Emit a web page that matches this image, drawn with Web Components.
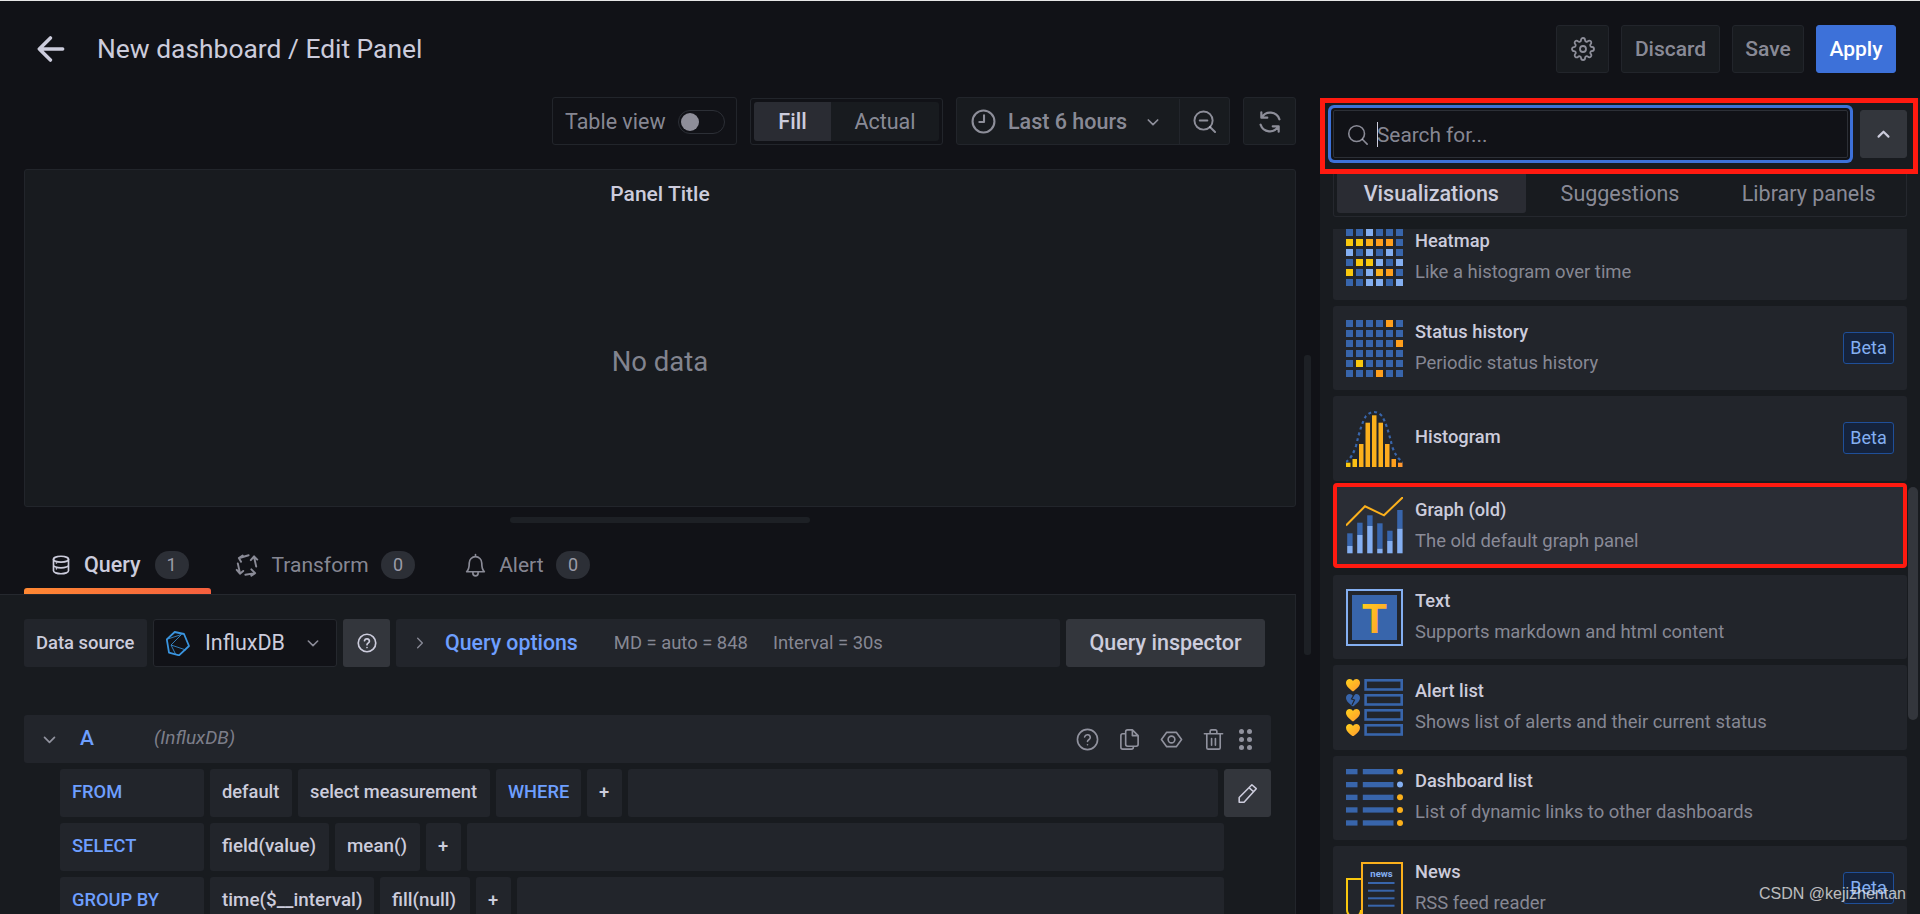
<!DOCTYPE html>
<html lang="en">
<head>
<meta charset="utf-8">
<title>Edit Panel</title>
<style>
  html, body { margin: 0; height: 100%; background: #111217; overflow: hidden; }
  body { font-family: Roboto, "Liberation Sans", sans-serif; color: #ccccdc; }
</style>
</head>
<body>
<gf-app></gf-app>
<script>
const BLUE = '#3865ab', LIGHT = '#84aff1';

/** Line icons, drawn on a 24 unit grid. */
const ICONS = {
    gear: '<circle cx="12" cy="12" r="3"/><path d="M19.4 15a1.65 1.65 0 0 0 .33 1.82l.06.06a2 2 0 0 1 0 2.83 2 2 0 0 1-2.83 0l-.06-.06a1.65 1.65 0 0 0-1.82-.33 1.65 1.65 0 0 0-1 1.51V21a2 2 0 0 1-2 2 2 2 0 0 1-2-2v-.09A1.65 1.65 0 0 0 9 19.4a1.65 1.65 0 0 0-1.82.33l-.06.06a2 2 0 0 1-2.83 0 2 2 0 0 1 0-2.83l.06-.06a1.65 1.65 0 0 0 .33-1.82 1.65 1.65 0 0 0-1.51-1H3a2 2 0 0 1-2-2 2 2 0 0 1 2-2h.09A1.65 1.65 0 0 0 4.6 9a1.65 1.65 0 0 0-.33-1.82l-.06-.06a2 2 0 0 1 0-2.83 2 2 0 0 1 2.83 0l.06.06a1.65 1.65 0 0 0 1.82.33H9a1.65 1.65 0 0 0 1-1.51V3a2 2 0 0 1 2-2 2 2 0 0 1 2 2v.09a1.65 1.65 0 0 0 1 1.51 1.65 1.65 0 0 0 1.82-.33l.06-.06a2 2 0 0 1 2.83 0 2 2 0 0 1 0 2.83l-.06.06a1.65 1.65 0 0 0-.33 1.82V9a1.65 1.65 0 0 0 1.51 1H21a2 2 0 0 1 2 2 2 2 0 0 1-2 2h-.09a1.65 1.65 0 0 0-1.51 1z"/>',
    back: '<path d="M2 12h20M11.5 2.5 2 12l9.5 9.5"/>',
    clock: '<circle cx="12" cy="12" r="10.5"/><path d="M12.5 6v6.5H8"/>',
    zoomout: '<circle cx="11" cy="11" r="9.5"/><path d="M23 23l-5.3-5.3M7 11h8"/>',
    sync: '<path d="M4 3v5h5.500M4.300 8A9 9 0 0 1 20.700 9.500M20 21v-5h-5.500M19.700 16A9 9 0 0 1 3.300 14.500"/>',
    search: '<circle cx="11" cy="11" r="9"/><path d="M23 23l-5.500-5.500"/>',
    database: '<ellipse cx="12" cy="5" rx="9" ry="3.500"/><path d="M3 5v14c0 1.900 4 3.500 9 3.500s9-1.600 9-3.500V5M3 12c0 1.900 4 3.500 9 3.500s9-1.600 9-3.500"/><path d="M6.500 9.600h.01M6.500 16.600h.01"/>',
    transform: '<path d="M13.500 3 5 5.500M8 3.200 4.500 5.500 6.500 9M20.500 13.500 18.500 4.500M15.500 7.500 18.500 4 21.500 7M10.500 21l9-1.500M16 16l3.500 3.500-3.500 2.300M3.500 10.500l2 9M2.500 16.500l3 3.500 3-2.500"/>',
    bell: '<path d="M18 9.500a6 6 0 0 0-12 0c0 5-1 7-2.500 8.500h17C19 16.500 18 14.500 18 9.500zM12 3.500V1.500M9.500 18v1.500a2.500 2.500 0 0 0 5 0V18"/>',
    help: '<circle cx="12" cy="12" r="10.500"/><path d="M9 9.300a3 3 0 0 1 5.900.7c0 2-2.900 2.400-2.900 4M12 17.500h.01"/>',
    copy: '<path d="M10 2h5l6 6v9a2 2 0 0 1-2 2h-9a2 2 0 0 1-2-2V4a2 2 0 0 1 2-2zM15 2v6h6M8 6H5a2 2 0 0 0-2 2v12a2 2 0 0 0 2 2h9a2 2 0 0 0 2-2v-1"/>',
    eye: '<path d="M1.500 12 7 4.500h10L22.500 12 17 19.500H7z" stroke-linejoin="round"/><circle cx="12" cy="12" r="3.500"/>',
    trash: '<path d="M2.500 6h19M8.500 6V3.500a1.500 1.500 0 0 1 1.500-1.500h4a1.500 1.500 0 0 1 1.500 1.500V6M19 6v14.500a1.500 1.500 0 0 1-1.500 1.500h-11A1.500 1.500 0 0 1 5 20.500V6M10 11v7M14 11v7"/>',
    pen: '<path d="M17 2l5 4.500L8 22H2.500v-5.500zM14 5.500l5 4.500"/>',
    down: '<path d="M5 9l7 7 7-7"/>',
    up: '<path d="M5 15l7-7 7 7"/>',
    right: '<path d="M8 4l8 8-8 8"/>'
};

/**
 * A single line icon from the ICONS table.
 */
class GfIcon extends HTMLElement {
    connectedCallback() {
        const size = this.getAttribute('size') || 24;
        const weight = this.getAttribute('weight') || 2;
        this.attachShadow({ mode: 'open' }).innerHTML = `
            <style>:host { display: inline-flex; flex: none; line-height: 0; }</style>
            <svg width="${size}" height="${size}" viewBox="0 0 24 24" fill="none" stroke="currentColor"
                 stroke-width="${weight}" stroke-linecap="round" stroke-linejoin="round">${ICONS[this.getAttribute('name')]}</svg>`;
    }
}
customElements.define('gf-icon', GfIcon);

/**
 * Toolbar and form button. Variants: default (outlined), primary, solid.
 */
class GfButton extends HTMLElement {
    constructor() {
        super();
        this.attachShadow({ mode: 'open' }).innerHTML = `
            <style>
                :host {
                    display: inline-flex; align-items: center; justify-content: center; flex: none;
                    box-sizing: border-box; height: 48px; padding: 0 13px; border-radius: 3px;
                    font: 500 21px/1 Roboto, sans-serif; color: rgba(204,204,220,.65);
                    background: #181b1f; border: 1px solid #22252b;
                }
                :host([variant=primary]) { background: #3d71d9; border-color: #3d71d9; color: #fff; }
                :host([variant=solid]) { background: #33363c; border-color: #33363c; color: #ccccdc; }
            </style>
            <slot></slot>`;
    }
}
customElements.define('gf-button', GfButton);

/**
 * Page header: back arrow, breadcrumb title and the action buttons.
 */
class GfTopBar extends HTMLElement {
    constructor() {
        super();
        this.attachShadow({ mode: 'open' }).innerHTML = `
            <style>
                :host { display: flex; align-items: center; box-sizing: border-box; height: 96px; padding: 0 24px 0 37px; }
                .back { color: #ccccdc; }
                h1 { margin: 0 auto 0 32px; font: 400 26.400px/1 Roboto, sans-serif; color: #ccccdc; }
                .actions { display: flex; gap: 12px; }
                #settings { width: 53px; }
                #discard { width: 99px; }
                #save { width: 72px; }
                #apply { width: 80px; }
            </style>
            <gf-icon class="back" name="back" size="28" weight="3"></gf-icon>
            <h1>New dashboard / Edit Panel</h1>
            <div class="actions">
                <gf-button id="settings"><gf-icon name="gear" size="24" weight="1.800"></gf-icon></gf-button>
                <gf-button id="discard">Discard</gf-button>
                <gf-button id="save">Save</gf-button>
                <gf-button id="apply" variant="primary">Apply</gf-button>
            </div>`;
    }
}
customElements.define('gf-top-bar', GfTopBar);

/**
 * Row above the panel: table toggle, fill mode, time range and refresh.
 */
class GfPanelToolbar extends HTMLElement {
    constructor() {
        super();
        this.attachShadow({ mode: 'open' }).innerHTML = `
            <style>
                :host { display: flex; justify-content: flex-end; align-items: stretch; gap: 13px; height: 48px; font: 400 21.500px/1 Roboto, sans-serif; color: rgba(204,204,220,.65); }
                .box { display: flex; align-items: center; box-sizing: border-box; border: 1px solid #22252b; border-radius: 3px; }
                .table { width: 185px; padding: 1px 0 0 12px; gap: 12px; }
                .switch { position: relative; box-sizing: border-box; width: 47px; height: 24px; border: 1px solid #2c2f36; border-radius: 12px; }
                .switch::after { content: ""; position: absolute; left: 2px; top: 2px; width: 18px; height: 18px; border-radius: 50%; background: #8e8e99; }
                .fill { width: 193px; padding: 3px; margin-top: 1px; }
                .fill span { display: flex; align-items: center; justify-content: center; height: 39px; background: #181b1f; }
                .fill .on { width: 77px; flex: none; background: #2a2c33; color: #ccccdc; font-weight: 500; border-radius: 3px 0 0 3px; }
                .fill .off { flex: 1; border-radius: 0 3px 3px 0; }
                .time { width: 274px; padding-top: 1px; background: #181b1f; font-weight: 500; }
                .range { display: flex; align-items: center; height: 100%; width: 223px; box-sizing: border-box; padding-left: 14px; gap: 12px; border-right: 1px solid #22252b; }
                .range gf-icon:last-child { margin-left: 6px; }
                .minus { flex: 1; display: flex; justify-content: center; }
                .refresh { width: 53px; padding-top: 1px; justify-content: center; background: #181b1f; }
            </style>
            <div class="box table">Table view<div class="switch"></div></div>
            <div class="box fill"><span class="on">Fill</span><span class="off">Actual</span></div>
            <div class="box time">
                <div class="range"><gf-icon name="clock" size="25"></gf-icon>Last 6 hours<gf-icon name="down" size="16" weight="2.600"></gf-icon></div>
                <div class="minus"><gf-icon name="zoomout" size="23"></gf-icon></div>
            </div>
            <div class="box refresh"><gf-icon name="sync" size="26"></gf-icon></div>`;
    }
}
customElements.define('gf-panel-toolbar', GfPanelToolbar);

/**
 * The empty preview panel.
 */
class GfPanelView extends HTMLElement {
    constructor() {
        super();
        this.attachShadow({ mode: 'open' }).innerHTML = `
            <style>
                :host { display: flex; flex-direction: column; box-sizing: border-box; height: 338px; margin: 24px 0 0 24px; background: #181b1f; border: 1px solid #22252b; border-radius: 3px; }
                .title { height: 48px; display: flex; align-items: center; justify-content: center; font: 500 21px/1 Roboto, sans-serif; color: #ccccdc; }
                .empty { flex: 1; display: flex; align-items: center; justify-content: center; font: 400 27.500px/1 Roboto, sans-serif; color: rgba(204,204,220,.6); }
            </style>
            <div class="title">Panel Title</div>
            <div class="empty">No data</div>`;
    }
}
customElements.define('gf-panel-view', GfPanelView);

/**
 * Query / Transform / Alert tab strip.
 */
class GfTabBar extends HTMLElement {
    constructor() {
        super();
        this.attachShadow({ mode: 'open' }).innerHTML = `
            <style>
                :host { display: flex; box-sizing: border-box; height: 71px; padding-left: 24px; font: 400 21px/1 Roboto, sans-serif; color: rgba(204,204,220,.65); }
                .tab { display: flex; align-items: center; height: 71px; box-sizing: border-box; padding-top: 13px; gap: 11.500px; position: relative; }
                .tab.on { color: #ccccdc; font-weight: 500; font-size: 21.500px; width: 187px; padding-left: 27px; gap: 13px; }
                .tab.on::after { content: ""; position: absolute; left: 0; right: 0; bottom: 0; height: 6px; border-radius: 3px 3px 0 0; background: linear-gradient(90deg, #ff8833, #f55f3e); }
                .tab.t { margin-left: 23px; }
                .tab.a { margin-left: 47.500px; }
                .count { display: flex; align-items: center; justify-content: center; width: 34px; height: 28px; margin-left: 1px; border-radius: 14px; background: #2c2f36; font-size: 18px; font-weight: 400; color: rgba(204,204,220,.7); }
            </style>
            <div class="tab on"><gf-icon name="database" size="20"></gf-icon>Query<span class="count">1</span></div>
            <div class="tab t"><gf-icon name="transform" size="26" weight="1.800"></gf-icon>Transform<span class="count">0</span></div>
            <div class="tab a"><gf-icon name="bell" size="25" weight="1.600"></gf-icon>Alert<span class="count">0</span></div>`;
    }
}
customElements.define('gf-tab-bar', GfTabBar);

/**
 * One cell of the query builder. kind: key (blue), value, or fill (empty stretch).
 */
class GfSegment extends HTMLElement {
    constructor() {
        super();
        const width = this.getAttribute('w');
        this.attachShadow({ mode: 'open' }).innerHTML = `
            <style>
                :host { display: flex; align-items: center; flex: none; box-sizing: border-box; height: 48px; padding: 0 0 2px 12px; border-radius: 3px; background: #22252b; font: 500 18.300px/1 Roboto, sans-serif; color: #ccccdc; white-space: nowrap; }
                :host([kind=key]) { color: #6e9fff; }
                :host([kind=label]) { color: #6e9fff; width: 144px; }
                :host([kind=fn]) { font-size: 18.800px; }
                :host([kind=fill]) { flex: 1; padding: 0; }
            </style>
            <slot></slot>`;
        if (width) this.style.width = width + 'px';
    }
}
customElements.define('gf-segment', GfSegment);

/**
 * Data source row plus query A with its FROM / SELECT / GROUP BY rows.
 */
class GfQueryEditor extends HTMLElement {
    constructor() {
        super();
        this.attachShadow({ mode: 'open' }).innerHTML = `
            <style>
                :host { display: block; flex: 1; box-sizing: border-box; padding: 24px 25px 0 24px; background: #181b1f; border-top: 1px solid #25282e; border-right: 1px solid #22252b; overflow: hidden; }
                .source { display: flex; gap: 6px; height: 48px; width: 1241px; }
                .cell { display: flex; align-items: center; box-sizing: border-box; height: 48px; border-radius: 3px; background: #22252b; }
                .ds { width: 123px; padding-left: 12px; font: 500 18.400px/1 Roboto, sans-serif; }
                .select { width: 184px; padding-left: 12px; background: #111217; border: 1px solid #25282e; font: 400 21.500px/1 Roboto, sans-serif; }
                .select svg { margin-right: 15px; flex: none; }
                .select gf-icon { margin-left: 20px; color: rgba(204,204,220,.65); }
                .help { width: 47px; justify-content: center; background: #33363c; }
                .options { flex: 1; padding-left: 17px; color: rgba(204,204,220,.6); font: 400 18.400px/1 Roboto, sans-serif; }
                .options b { margin: 0 36px 0 18px; font: 500 21.300px/1 Roboto, sans-serif; color: #6e9fff; }
                .options i { font-style: normal; margin-right: 25px; }
                .inspect { width: 199px; padding: 0; margin: 0; font-size: 21.500px; }
                .head { display: flex; align-items: center; box-sizing: border-box; height: 48px; width: 1247px; margin-top: 48px; padding: 0 19px 0 17px; border-radius: 3px; background: #22252b; color: rgba(204,204,220,.65); }
                .letter { margin-left: 22px; padding-bottom: 2px; font: 500 21px/1 Roboto, sans-serif; color: #6e9fff; }
                .ds-name { margin-left: 60px; padding-bottom: 4px; font: italic 400 19px/1 Roboto, sans-serif; color: rgba(204,204,220,.55); }
                .tools { margin-left: auto; display: flex; align-items: center; gap: 19px; }
                .drag { display: grid; grid-template-columns: 5px 5px; gap: 3px; margin-left: -5px; }
                .drag span { width: 5px; height: 5px; border-radius: 50%; background: currentColor; }
                .rows { display: flex; flex-direction: column; gap: 6px; margin: 6px 0 0 36px; width: 1211px; }
                .row { display: flex; gap: 6px; }
                .row.narrow { width: 1164px; }
                .pen { width: 47px; padding: 0; flex: none; }
            </style>
            <div class="source">
                <div class="cell ds">Data source</div>
                <div class="cell select">
                    <svg width="24" height="25" viewBox="0 0 24 25" fill="none" stroke="#3a95e0" stroke-width="1.800" stroke-linejoin="round">
                        <path d="M8.700 1 18 3l5 12-10 9.300L3 21.700.8 8.300z"/>
                        <path d="M15.500 3.500 5 14l4.500 9M5 14l15 5M.8 8.300 15.500 3.500" stroke-width=".8"/>
                    </svg>
                    InfluxDB<gf-icon name="down" size="16" weight="2.400"></gf-icon>
                </div>
                <div class="cell help"><gf-icon name="help" size="20"></gf-icon></div>
                <div class="cell options"><gf-icon name="right" size="14" weight="2.400"></gf-icon><b>Query options</b><i>MD = auto = 848</i><i>Interval = 30s</i></div>
                <gf-button class="inspect" variant="solid">Query inspector</gf-button>
            </div>
            <div class="head">
                <gf-icon name="down" size="17" weight="2.400"></gf-icon>
                <span class="letter">A</span>
                <span class="ds-name">(InfluxDB)</span>
                <div class="tools">
                    <gf-icon name="help" size="23" weight="1.700"></gf-icon>
                    <gf-icon name="copy" size="23" weight="1.700"></gf-icon>
                    <gf-icon name="eye" size="23" weight="1.700"></gf-icon>
                    <gf-icon name="trash" size="23" weight="1.700"></gf-icon>
                    <div class="drag"><span></span><span></span><span></span><span></span><span></span><span></span></div>
                </div>
            </div>
            <div class="rows">
                <div class="row">
                    <gf-segment kind="label">FROM</gf-segment>
                    <gf-segment w="82">default</gf-segment>
                    <gf-segment w="192">select measurement</gf-segment>
                    <gf-segment w="85" kind="key">WHERE</gf-segment>
                    <gf-segment w="35">+</gf-segment>
                    <gf-segment kind="fill"></gf-segment>
                    <gf-button class="pen" variant="solid"><gf-icon name="pen" size="21" weight="1.800"></gf-icon></gf-button>
                </div>
                <div class="row narrow">
                    <gf-segment kind="label">SELECT</gf-segment>
                    <gf-segment w="119" kind="fn">field(value)</gf-segment>
                    <gf-segment w="85" kind="fn">mean()</gf-segment>
                    <gf-segment w="35">+</gf-segment>
                    <gf-segment kind="fill"></gf-segment>
                </div>
                <div class="row narrow">
                    <gf-segment kind="label">GROUP BY</gf-segment>
                    <gf-segment w="164" kind="fn">time($__interval)</gf-segment>
                    <gf-segment w="90" kind="fn">fill(null)</gf-segment>
                    <gf-segment w="35">+</gf-segment>
                    <gf-segment kind="fill"></gf-segment>
                </div>
            </div>`;
    }
}
customElements.define('gf-query-editor', GfQueryEditor);

/** Square grid of plugin cells, laid out from a colour string (b, l, y, o). */
function gridIcon(rows) {
    const fills = { b: BLUE, l: LIGHT, y: '#f9c80e', o: '#ff9f1c', m: '#fbb01c' };
    let out = '';
    rows.forEach((row, y) => [...row].forEach((c, x) => {
        out += `<rect x="${x * 10}" y="${y * 10}" width="7" height="7" fill="${fills[c]}"/>`;
    }));
    return out;
}

function heart(y, color) {
    return `<path transform="translate(0 ${y})" d="M7 12.500C3 9.500 0 7 0 3.700 0 1.500 1.700 0 3.700 0 5 0 6.300 .7 7 2 7.700 .7 9 0 10.300 0 12.300 0 14 1.500 14 3.700 14 7 11 9.500 7 12.500z" fill="${color}"/>`;
}

/** Plugin artwork for each card, on a 57 x 57 box. url(#warm) comes from the card's svg. */
const PLUGIN_ART = {
    heatmap: gridIcon(['bblbbb', 'yymoob', 'lblblb', 'byylbl', 'yblmob', 'bbllbl']),
    status: gridIcon(['bbbbob', 'bbbbbb', 'bbbbbo', 'bbbbbb', 'bybbbb', 'bbbobb']),
    histogram: `
        <path d="M0 52Q6 48 10 36 15 14 20 6 28 -2 36 6 41 14 46 36 50 48 57 52" fill="none" stroke="${BLUE}" stroke-width="2.200" stroke-dasharray="3 3"/>
        ${[[0, 52.700, '#f9c80e'], [6.500, 49, '#fbc015'], [13, 34, '#fbb01c'], [19.500, 12.700, '#fbb01c'], [26, 5.300, '#fbb01c'], [32.500, 12.700, '#fbb01c'], [39, 34, '#fdaa1f'], [45.500, 49, '#ffa01c'], [52, 52.700, '#ff9830']]
            .map(b => `<rect x="${b[0]}" y="${b[1]}" width="4.500" height="${57 - b[1]}" fill="${b[2]}"/>`).join('')}`,
    graph: `
        ${[[36.300, 49], [25.700, 38], [18.300, 29], [26.300, 51.700], [33.700, 44], [13, 31.700]].map((b, i) => `
            <rect x="${1.200 + i * 10}" y="${b[0]}" width="5.400" height="${b[1] - b[0]}" fill="${BLUE}"/>
            <rect x="${1.200 + i * 10}" y="${b[1]}" width="5.400" height="${56.300 - b[1]}" fill="${LIGHT}"/>`).join('')}
        <path d="M0 28.500 19 9.300 38 18.300 57 0" fill="none" stroke="#fbb01c" stroke-width="2"/>`,
    text: `
        <rect x="1" y="1" width="55" height="55" fill="none" stroke="${LIGHT}" stroke-width="2"/>
        <rect x="6" y="6" width="45" height="45" fill="${BLUE}"/>
        <text x="28.500" y="44" text-anchor="middle" font-family="Roboto, sans-serif" font-weight="700" font-size="41" fill="url(#warm)">T</text>`,
    alert: `
        ${heart(0, 'url(#warm)')}${heart(15, BLUE)}<path d="M8.500 15 5.500 20l3 1-2.500 5" fill="none" stroke="#22252b" stroke-width="1.200"/>${heart(30, 'url(#warm)')}${heart(45, 'url(#warm)')}
        ${[0, 15, 30, 45].map(y => `<rect x="19.600" y="${y + 1.300}" width="36.100" height="9.200" fill="none" stroke="${BLUE}" stroke-width="2.600"/>`).join('')}`,
    dashlist: [0, 13, 25.700, 38.300, 51.300].map((y, i) => `
        <rect x="0" y="${y}" width="11.500" height="5.300" fill="${BLUE}"/>
        <rect x="16.800" y="${y}" width="30.700" height="5.300" fill="${BLUE}"/>
        <circle cx="54" cy="${y + 2.600}" r="3" fill="${i === 1 ? LIGHT : '#fbb01c'}"/>`).join(''),
    news: `
        <path d="M16 62V3H56V62" fill="none" stroke="#fbb01c" stroke-width="2"/>
        <path d="M15 19H1V50a7 7 0 0 0 14 0" fill="none" stroke="#f9c80e" stroke-width="2"/>
        <text x="35.500" y="17" text-anchor="middle" font-family="Roboto, sans-serif" font-weight="700" font-size="9.500" fill="${LIGHT}">news</text>
        ${[23, 30.700, 38.300, 45.700].map(y => `<rect x="22" y="${y - 1}" width="26.500" height="2" fill="${BLUE}"/>`).join('')}`
};

/**
 * One row of the visualization list.
 */
class GfVizCard extends HTMLElement {
    connectedCallback() {
        const desc = this.getAttribute('desc');
        this.attachShadow({ mode: 'open' }).innerHTML = `
            <style>
                :host { display: flex; align-items: center; flex: none; box-sizing: border-box; height: 84.33px; padding: 0 13px; gap: 12px; background: #22252b; border-radius: 3px; overflow: hidden; }
                :host([active]) { height: 85px; margin: -4px 0 1.330px; padding: 0 9px; background: #2a2d35; border: 4px solid #ff1a10; border-radius: 4px; }
                svg { flex: none; overflow: hidden; }
                .text { flex: 1; display: flex; flex-direction: column; gap: 7px; min-width: 0; padding-bottom: 2px; }
                :host([active]) .text { padding-bottom: 0; }
                .name { font: 500 18.300px/24px Roboto, sans-serif; color: #ccccdc; }
                .desc { font: 400 18.450px/24px Roboto, sans-serif; color: rgba(204,204,220,.6); }
                .beta { box-sizing: border-box; width: 51px; height: 32px; display: flex; align-items: center; justify-content: center; border: 1px solid #1f4f99; border-radius: 3px; background: #15233c; font: 400 18px/1 Roboto, sans-serif; color: #84aff1; }
            </style>
            <svg width="57" height="57" viewBox="0 0 57 57">
                <defs><linearGradient id="warm" x1="0" y1="0" x2="1" y2="1"><stop offset="0" stop-color="#ffd21c"/><stop offset="1" stop-color="#ff9830"/></linearGradient></defs>
                ${PLUGIN_ART[this.getAttribute('art')]}
            </svg>
            <div class="text">
                <div class="name">${this.getAttribute('name')}</div>
                ${desc ? `<div class="desc">${desc}</div>` : ''}
            </div>
            ${this.hasAttribute('beta') ? '<div class="beta">Beta</div>' : ''}`;
    }
}
customElements.define('gf-viz-card', GfVizCard);

/**
 * Right hand column: search box, picker tabs and the list of plugins.
 */
class GfVizPicker extends HTMLElement {
    constructor() {
        super();
        this.attachShadow({ mode: 'open' }).innerHTML = `
            <style>
                :host { display: flex; flex-direction: column; background: #181b1f; min-height: 0; margin-top: 1px; }
                .bar { display: flex; gap: 12px; box-sizing: border-box; width: 598px; height: 76px; padding: 7px 0 0 8px; border: 5px solid #ff1a10; }
                .input { display: flex; align-items: center; box-sizing: border-box; width: 515px; height: 48px; padding-left: 13px; gap: 9px; background: #111217; border: 1px solid #2c2f36; border-radius: 2px; box-shadow: 0 0 0 2px #111217, 0 0 0 5px #3d71d9; color: rgba(204,204,220,.65); font: 400 20.800px/1 Roboto, sans-serif; }
                .input span:last-child { padding-top: 2px; }
                .caret { width: 1px; height: 25px; background: #ccccdc; margin-right: -10px; }
                .tabs { display: grid; grid-template-columns: repeat(3, 1fr); box-sizing: border-box; height: 43px; margin: 0 13px; padding: 0 3px 3px; border: 1px solid #25282e; border-top: 0; border-radius: 0 0 3px 3px; font: 400 21.500px/1 Roboto, sans-serif; color: rgba(204,204,220,.65); }
                .tabs span { display: flex; align-items: center; justify-content: center; padding-top: 1px; }
                .tabs .on { background: #2a2c33; color: #ccccdc; font-weight: 500; border-radius: 0 0 3px 3px; }
                .body { flex: 1; display: flex; min-height: 0; margin-top: 12px; padding-left: 13px; }
                .list { flex: none; width: 574px; display: flex; flex-direction: column; gap: 6px; overflow: hidden; }
                .list ::slotted(:first-child) { margin-top: -13.330px; }
                .thumb { flex: none; width: 10px; height: 233px; margin: 258px 0 0 1px; border-radius: 5px; background: #33363c; }
            </style>
            <div class="bar">
                <div class="input"><gf-icon name="search" size="21" weight="1.800"></gf-icon><span class="caret"></span><span>Search for...</span></div>
                <gf-button style="width:47px;padding:0" variant="solid"><gf-icon name="up" size="17" weight="3"></gf-icon></gf-button>
            </div>
            <div class="tabs"><span class="on">Visualizations</span><span>Suggestions</span><span>Library panels</span></div>
            <div class="body">
                <div class="list"><slot></slot></div>
                <div class="thumb"></div>
            </div>`;
    }
}
customElements.define('gf-viz-picker', GfVizPicker);

/**
 * The site watermark that lies over the bottom right corner.
 */
class GfWatermark extends HTMLElement {
    constructor() {
        super();
        this.attachShadow({ mode: 'open' }).innerHTML = `
            <style>
                :host { position: absolute; left: 1759px; top: 883px; font: 400 16px/22px "Liberation Sans", Arial, sans-serif; color: rgba(230,230,230,.8); white-space: nowrap; }
            </style>
            <slot></slot>`;
    }
}
customElements.define('gf-watermark', GfWatermark);

/**
 * Whole page: editor column, scroll gutter and picker column.
 */
class GfApp extends HTMLElement {
    constructor() {
        super();
        this.attachShadow({ mode: 'open' }).innerHTML = `
            <style>
                :host { display: flex; flex-direction: column; box-sizing: border-box; height: 914px; overflow: hidden; border-top: 1px solid #e6e6e6; background: #111217; }
                .main { flex: 1; min-height: 0; display: grid; grid-template-columns: 1296px 24px 600px; }
                .editor { display: flex; flex-direction: column; min-height: 0; }
                .handle { flex: none; width: 300px; height: 6px; margin: 10px 0 0 510px; border-radius: 3px; background: #1d2025; }
                .gutter { padding-left: 8px; }
                .gutter div { width: 7px; height: 300px; margin-top: 258px; border-radius: 3px; background: #1d2025; }
            </style>
            <gf-top-bar></gf-top-bar>
            <div class="main">
                <div class="editor">
                    <gf-panel-toolbar></gf-panel-toolbar>
                    <gf-panel-view></gf-panel-view>
                    <div class="handle"></div>
                    <gf-tab-bar></gf-tab-bar>
                    <gf-query-editor></gf-query-editor>
                </div>
                <div class="gutter"><div></div></div>
                <gf-viz-picker>
                    <gf-viz-card art="heatmap" name="Heatmap" desc="Like a histogram over time"></gf-viz-card>
                    <gf-viz-card art="status" name="Status history" desc="Periodic status history" beta></gf-viz-card>
                    <gf-viz-card art="histogram" name="Histogram" beta></gf-viz-card>
                    <gf-viz-card art="graph" name="Graph (old)" desc="The old default graph panel" active></gf-viz-card>
                    <gf-viz-card art="text" name="Text" desc="Supports markdown and html content"></gf-viz-card>
                    <gf-viz-card art="alert" name="Alert list" desc="Shows list of alerts and their current status"></gf-viz-card>
                    <gf-viz-card art="dashlist" name="Dashboard list" desc="List of dynamic links to other dashboards"></gf-viz-card>
                    <gf-viz-card art="news" name="News" desc="RSS feed reader" beta></gf-viz-card>
                </gf-viz-picker>
            </div>
            <gf-watermark>CSDN @kejizhentan</gf-watermark>`;
    }
}
customElements.define('gf-app', GfApp);
</script>
</body>
</html>
